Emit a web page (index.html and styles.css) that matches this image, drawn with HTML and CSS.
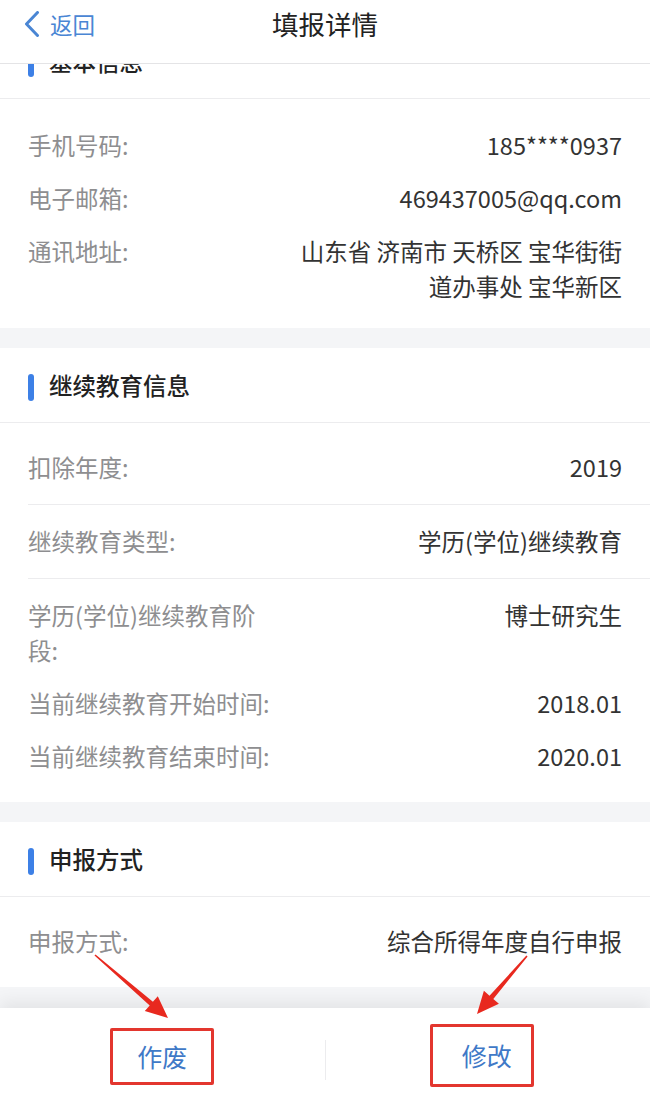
FILE: index.html
```html
<!DOCTYPE html>
<html lang="zh-CN">
<head>
<meta charset="utf-8">
<title>填报详情</title>
<link rel="stylesheet" href="styles.css">
</head>
<body>
<div class="page">
  <header class="nav">
    <div class="back">
      <svg class="chev" viewBox="0 0 16 26" width="16" height="26"><polyline points="13.5,1.5 2.5,13 13.5,24.5" fill="none" stroke="#4a86d4" stroke-width="3" stroke-linecap="round" stroke-linejoin="round"/></svg>
      <span>返回</span>
    </div>
    <div class="title">填报详情</div>
    <div></div>
  </header>

  <main class="content">
    <section class="section section-first">
      <div class="sec-head"><span class="bar"></span><span class="sec-title">基本信息</span></div>
      <div class="sec-body body-first">
        <div class="row"><span class="label">手机号码:</span><span class="value">185****0937</span></div>
        <div class="row"><span class="label">电子邮箱:</span><span class="value">469437005@qq.com</span></div>
        <div class="row"><span class="label">通讯地址:</span><span class="value">山东省 济南市 天桥区 宝华街街<br>道办事处 宝华新区</span></div>
      </div>
    </section>

    <section class="section">
      <div class="sec-head"><span class="bar"></span><span class="sec-title">继续教育信息</span></div>
      <div class="sec-body">
        <div class="row divided"><span class="label">扣除年度:</span><span class="value">2019</span></div>
        <div class="row divided"><span class="label">继续教育类型:</span><span class="value">学历(学位)继续教育</span></div>
        <div class="row"><span class="label">学历(学位)继续教育阶<br>段:</span><span class="value">博士研究生</span></div>
        <div class="row"><span class="label">当前继续教育开始时间:</span><span class="value">2018.01</span></div>
        <div class="row"><span class="label">当前继续教育结束时间:</span><span class="value">2020.01</span></div>
      </div>
    </section>

    <section class="section">
      <div class="sec-head"><span class="bar"></span><span class="sec-title">申报方式</span></div>
      <div class="sec-body">
        <div class="row"><span class="label">申报方式:</span><span class="value">综合所得年度自行申报</span></div>
      </div>
    </section>
  </main>

  <footer class="bottombar">
    <div class="btn"><span class="mark mark-a"><span class="btn-text">作废</span></span></div>
    <div class="divider"></div>
    <div class="btn"><span class="mark mark-b"><span class="btn-text">修改</span></span></div>
  </footer>
</div>

<svg class="annot" viewBox="0 0 650 1111" width="650" height="1111">
  <polygon fill="#e8291f" points="94.5,955.6 149.7,1005.5 144.8,1011 168,1018 157.8,996.2 152.9,1001.7 95.5,954.4"/>
  <polygon fill="#e8291f" points="526.4,955.6 489.5,995.7 483.9,990.8 477,1014 498.9,1003.8 493.3,998.9 527.6,956.4"/>
</svg>
</body>
</html>
```

FILE: styles.css
```css
* { box-sizing: border-box; }

body {
  margin: 0;
  width: 650px;
  height: 1111px;
  overflow: hidden;
  position: relative;
  font-family: "Noto Sans CJK SC", "Noto Sans", sans-serif;
  background: #f4f5f7;
}

.page {
  display: flex;
  flex-direction: column;
  height: 1111px;
}

.nav {
  flex: none;
  height: 64px;
  background: #fff;
  border-bottom: 1px solid #e4e4e6;
  display: grid;
  grid-template-columns: 1fr auto 1fr;
  align-items: start;
  padding-top: 6px;
  position: relative;
  z-index: 2;
}

.back {
  display: flex;
  align-items: center;
  padding-left: 24px;
  gap: 10px;
  color: #4a86d4;
  font-size: 22.5px;
  line-height: 36px;
}

.chev { display: block; }

.title {
  font-size: 26.5px;
  line-height: 36px;
  color: #222;
}

.content {
  flex: 1;
  overflow: hidden;
  background: #f4f5f7;
}

.section {
  background: #fff;
  margin-bottom: 20px;
}

.section-first { margin-top: -40px; }

.sec-head {
  height: 75px;
  border-bottom: 1px solid #ececee;
  display: flex;
  align-items: center;
  padding-left: 28px;
}

.bar {
  width: 6px;
  height: 27px;
  border-radius: 3px;
  background: #3d80e6;
  margin-right: 15px;
  margin-top: 5px;
}

.sec-title {
  font-size: 23.5px;
  font-weight: 500;
  color: #222;
  line-height: 35px;
}

.sec-body { padding: 18px 0 19px; }
.sec-body.body-first { padding: 20px 0 15px; }

.row {
  display: flex;
  justify-content: space-between;
  align-items: flex-start;
  gap: 20px;
  margin-left: 28px;
  padding: 9px 28px 9px 0;
  font-size: 23.5px;
  line-height: 35px;
}

.row.divided {
  padding-bottom: 19px;
  border-bottom: 1px solid #ececee;
}

.row.divided + .row { padding-top: 19px; }

.label {
  color: #8e8e90;
  white-space: nowrap;
}

.value {
  color: #333;
  text-align: right;
  white-space: nowrap;
}

.bottombar {
  flex: none;
  height: 103px;
  background: #fff;
  display: flex;
  align-items: center;
  box-shadow: 0 -6px 16px rgba(0, 0, 0, 0.07);
  position: relative;
  z-index: 1;
}

.btn {
  flex: 1;
  display: flex;
  justify-content: center;
  align-items: center;
}

.divider {
  width: 1px;
  height: 40px;
  background: #ececee;
}

.btn-text {
  display: block;
  font-size: 25px;
  line-height: 35px;
  color: #3f79c7;
}

.mark {
  display: block;
  border: 3px solid #e3362e;
  border-radius: 2px;
}

.mark-a {
  padding: 8px 24px;
  margin-bottom: 6px;
}

.mark-b {
  padding: 11px 19px 11px 29px;
  margin-right: 12px;
  margin-bottom: 8px;
}

.annot {
  position: absolute;
  left: 0;
  top: 0;
  pointer-events: none;
  z-index: 5;
}
```
